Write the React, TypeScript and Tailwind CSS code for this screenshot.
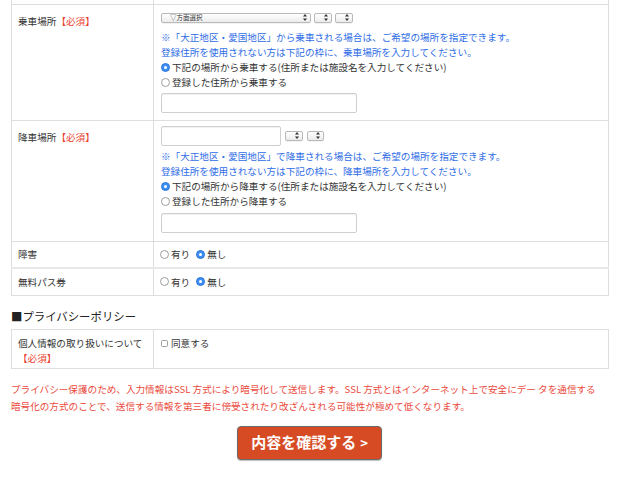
import React from 'react';

const FONT = { fontFamily: '"Noto Sans CJK JP", "Noto Sans", sans-serif' };

const Arrows = () => (
    <svg width="4" height="7" viewBox="0 0 4 7" className="shrink-0">
        <path d="M2 0 L4 2.6 L0 2.6 Z" fill="#333" />
        <path d="M2 7 L4 4.4 L0 4.4 Z" fill="#333" />
    </svg>
);

const SelectBox = ({ width, label }: { width: string; label?: string }) => (
    <div
        className={`${width} h-[10px] flex items-center justify-between px-[3px] rounded-[2px] border border-[#b9b9b9] bg-gradient-to-b from-[#ffffff] to-[#ececec] shadow-[0_0.5px_0.5px_rgba(0,0,0,0.1)]`}
    >
        <span className="text-[6.5px] leading-none text-[#333] pl-[5px]">{label}</span>
        <Arrows />
    </div>
);

const Radio = ({ checked }: { checked?: boolean }) =>
    checked ? (
        <span className="inline-flex items-center justify-center w-[9px] h-[9px] rounded-full bg-[#3d8ef2] border border-[#2d78dc] shrink-0">
            <span className="w-[3px] h-[3px] rounded-full bg-white" />
        </span>
    ) : (
        <span className="inline-block w-[9px] h-[9px] rounded-full bg-white border border-[#9d9d9d] shrink-0" />
    );

const Required = () => <span className="text-[#e8412e]">【必須】</span>;

const TextInput = ({ width }: { width: string }) => (
    <div className={`${width} h-[20px] border border-[#cfcfcf] rounded-[2px] bg-white shadow-[inset_0_1px_1px_rgba(0,0,0,0.06)]`} />
);

const RadioLine = ({ checked, children }: { checked?: boolean; children: React.ReactNode }) => (
    <div className="flex items-center gap-[2px] h-[15px]">
        <Radio checked={checked} />
        <span>{children}</span>
    </div>
);

export default function App() {
    return (
        <div className="w-[619px] h-[500px] bg-white text-[#333] text-[9.6px] overflow-hidden" style={FONT}>
            <div className="pl-[11px] w-[610px]">
                <table className="w-[598px] border-collapse table-fixed">
                    <colgroup>
                        <col className="w-[142px]" />
                        <col />
                    </colgroup>
                    <tbody>
                        <tr className="h-[4px]">
                            <td className="border-x border-b border-[#dedede] p-0" />
                            <td className="border-x border-b border-[#dedede] p-0" />
                        </tr>
                        {/* 乗車場所 */}
                        <tr>
                            <td className="border border-[#dedede] align-top pl-[6px] pt-[9px] leading-[15px]">
                                乗車場所<Required />
                            </td>
                            <td className="border border-[#dedede] align-top pl-[7px] pt-[8px] pb-[7px]">
                                <div className="flex items-center gap-[3px] h-[10px]">
                                    <SelectBox width="w-[150px]" label="▽方面選択" />
                                    <SelectBox width="w-[18px]" />
                                    <SelectBox width="w-[18px]" />
                                </div>
                                <div className="mt-[7px] leading-[15px] text-[#2f6de6]">
                                    <div>※「大正地区・愛国地区」から乗車される場合は、ご希望の場所を指定できます。</div>
                                    <div>登録住所を使用されない方は下記の枠に、乗車場所を入力してください。</div>
                                </div>
                                <RadioLine checked>下記の場所から乗車する(住所または施設名を入力してください)</RadioLine>
                                <RadioLine>登録した住所から乗車する</RadioLine>
                                <div className="mt-[3px]">
                                    <TextInput width="w-[196px]" />
                                </div>
                            </td>
                        </tr>
                        {/* 降車場所 */}
                        <tr>
                            <td className="border border-[#dedede] align-top pl-[6px] pt-[9px] leading-[15px]">
                                降車場所<Required />
                            </td>
                            <td className="border border-[#dedede] align-top pl-[7px] pt-[5px] pb-[8px]">
                                <div className="flex items-center gap-[4px]">
                                    <TextInput width="w-[120px]" />
                                    <SelectBox width="w-[18px]" />
                                    <SelectBox width="w-[17px]" />
                                </div>
                                <div className="mt-[3px] leading-[15px] text-[#2f6de6]">
                                    <div>※「大正地区・愛国地区」で降車される場合は、ご希望の場所を指定できます。</div>
                                    <div>登録住所を使用されない方は下記の枠に、降車場所を入力してください。</div>
                                </div>
                                <RadioLine checked>下記の場所から降車する(住所または施設名を入力してください)</RadioLine>
                                <RadioLine>登録した住所から降車する</RadioLine>
                                <div className="mt-[4px]">
                                    <TextInput width="w-[196px]" />
                                </div>
                            </td>
                        </tr>
                        {/* 障害 */}
                        <tr className="h-[27px]">
                            <td className="border border-[#dedede] align-middle pl-[6px]">障害</td>
                            <td className="border border-[#dedede] align-middle pl-[6px]">
                                <div className="flex items-center gap-[2px]">
                                    <Radio />
                                    <span>有り</span>
                                    <span className="w-[2px]" />
                                    <Radio checked />
                                    <span>無し</span>
                                </div>
                            </td>
                        </tr>
                        {/* 無料パス券 */}
                        <tr className="h-[27px]">
                            <td className="border border-t-2 border-[#dedede] border-t-[#e8e8e8] align-middle pl-[6px]">無料パス券</td>
                            <td className="border border-t-2 border-[#dedede] border-t-[#e8e8e8] align-middle pl-[6px]">
                                <div className="flex items-center gap-[2px]">
                                    <Radio />
                                    <span>有り</span>
                                    <span className="w-[2px]" />
                                    <Radio checked />
                                    <span>無し</span>
                                </div>
                            </td>
                        </tr>
                    </tbody>
                </table>

                <h2 className="mt-[13px] h-[16px] flex items-center text-[11.4px] leading-none text-[#222]">
                    ■プライバシーポリシー
                </h2>

                <table className="mt-[4px] w-[598px] border-collapse table-fixed">
                    <colgroup>
                        <col className="w-[142px]" />
                        <col />
                    </colgroup>
                    <tbody>
                        <tr>
                            <td className="border border-[#dedede] align-top pl-[6px] pt-[6px] pb-[2px] leading-[15px]">
                                <div>個人情報の取り扱いについて</div>
                                <Required />
                            </td>
                            <td className="border border-[#dedede] align-top pl-[7px] pt-[6px]">
                                <div className="flex items-center gap-[3px] h-[15px]">
                                    <span className="inline-block w-[7px] h-[7px] rounded-[1.5px] border border-[#9d9d9d] bg-white" />
                                    <span>同意する</span>
                                </div>
                            </td>
                        </tr>
                    </tbody>
                </table>

                <p className="mt-[12px] leading-[17px] text-[#ea4a3c] whitespace-nowrap">
                    プライバシー保護のため、入力情報はSSL 方式により暗号化して送信します。SSL 方式とはインターネット上で安全にデー タを通信する
                    <br />
                    暗号化の方式のことで、送信する情報を第三者に傍受されたり改ざんされる可能性が極めて低くなります。
                </p>

                <div className="mt-[11px] flex justify-center pr-[2px]">
                    <button className="w-[145px] h-[34px] rounded-[4px] bg-[#d64b24] border border-[#6b6b6b] text-white text-[15px] font-bold flex items-center justify-center gap-[4px] shadow-[0_1px_1px_rgba(0,0,0,0.25)]">
                        <span>内容を確認する</span>
                        <span className="text-[13px]">&gt;</span>
                    </button>
                </div>
            </div>
        </div>
    );
}
